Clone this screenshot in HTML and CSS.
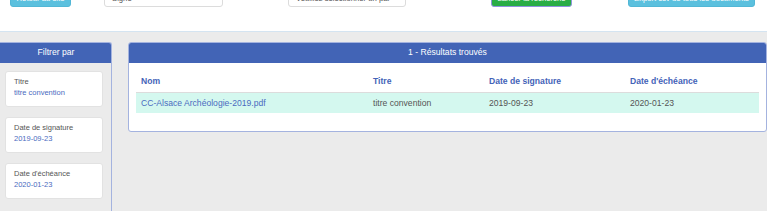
FILE: index.html
```html
<!DOCTYPE html>
<html lang="fr">
<head>
<meta charset="utf-8">
<title>Recherche documents</title>
<link rel="stylesheet" href="styles.css">
</head>
<body>
<header class="topbar">
  <div class="toolbar">
    <a class="btn btn-info btn-back">Retour au site</a>
    <div class="select select-status"><span class="select-text">Signé</span><svg class="caret" width="6" height="4" viewBox="0 0 6 4"><path d="M0.5 0.5 L3 3 L5.5 0.5" fill="none" stroke="#999" stroke-width="1"/></svg></div>
    <div class="select select-party"><span class="select-text">Veuillez sélectionner un parti</span><svg class="caret" width="6" height="4" viewBox="0 0 6 4"><path d="M0.5 0.5 L3 3 L5.5 0.5" fill="none" stroke="#999" stroke-width="1"/></svg></div>
    <a class="btn btn-success btn-search">Lancer la recherche</a>
    <a class="btn btn-info btn-export">Export csv de tous les documents</a>
  </div>
</header>
<main class="main">
  <aside class="sidebar">
    <div class="panel-head">Filtrer par</div>
    <div class="filters">
      <div class="filter-card">
        <div class="filter-label">Titre</div>
        <div class="filter-value">titre convention</div>
      </div>
      <div class="filter-card">
        <div class="filter-label">Date de signature</div>
        <div class="filter-value">2019-09-23</div>
      </div>
      <div class="filter-card">
        <div class="filter-label">Date d'échéance</div>
        <div class="filter-value">2020-01-23</div>
      </div>
    </div>
  </aside>
  <section class="results">
    <div class="panel-head">1 - Résultats trouvés</div>
    <div class="results-body">
      <table class="results-table">
        <thead>
          <tr>
            <th class="col-name">Nom</th>
            <th class="col-title">Titre</th>
            <th class="col-sign">Date de signature</th>
            <th class="col-end">Date d'échéance</th>
          </tr>
        </thead>
        <tbody>
          <tr class="row-hit">
            <td><a class="doc-link">CC-Alsace Archéologie-2019.pdf</a></td>
            <td>titre convention</td>
            <td>2019-09-23</td>
            <td>2020-01-23</td>
          </tr>
        </tbody>
      </table>
    </div>
  </section>
</main>
</body>
</html>
```
FILE: styles.css
```css
* { box-sizing: border-box; }
html, body { margin: 0; padding: 0; }
body {
  background: #ebebeb;
  font-family: "Liberation Sans", Arial, sans-serif;
  color: #555;
  overflow: hidden;
  height: 211px;
}

.topbar {
  height: 32px;
  background: #fff;
  border-bottom: 1px solid #d4e4f1;
  overflow: hidden;
}
.toolbar {
  display: flex;
  align-items: flex-start;
  margin-top: -12px;
  padding-left: 10px;
}
.btn {
  display: block;
  height: 19px;
  line-height: 20px;
  font-size: 7.7px;
  color: #fff;
  text-align: center;
  border-radius: 3px;
  white-space: nowrap;
  overflow: hidden;
}
.btn-info { background: #5bc0de; border: 1px solid #52b7d6; }
.btn-success { background: #29ad45; border: 1px solid #8e94dc; }
.btn-back { width: 61px; }
.select {
  display: flex;
  align-items: center;
  gap: 3px;
  height: 19px;
  padding: 1px 6px 0 7px;
  font-size: 7.7px;
  color: #555;
  background: #fff;
  border: 1px solid #dcdcdc;
  border-radius: 3px;
}
.select-text {
  flex: 1;
  min-width: 0;
  white-space: nowrap;
  overflow: hidden;
}
.caret { flex: none; }
.select-status { width: 119px; margin-left: 33px; }
.select-party { width: 118px; margin-left: 65px; }
.btn-search { width: 81px; margin-left: 85px; }
.btn-export { width: 127px; margin-left: 56px; }

.main {
  display: flex;
  align-items: flex-start;
  gap: 16px;
  padding-top: 10px;
}
.panel-head {
  height: 21px;
  line-height: 21px;
  background: #4264b6;
  color: #fff;
  font-size: 8.6px;
  text-align: center;
}
.sidebar {
  flex: none;
  width: 113px;
  margin-left: -1px;
  min-height: 200px;
  border: 1px solid #a4b3df;
  border-bottom: none;
  border-top-right-radius: 3px;
  overflow: hidden;
}
.sidebar .panel-head { margin: -1px -1px 0 0; }
.filters {
  display: flex;
  flex-direction: column;
  gap: 10px;
  padding: 8px 8px 0 5px;
}
.filter-card {
  background: #fff;
  border: 1px solid #e2e2e2;
  border-radius: 3px;
  padding: 5px 8px 8px;
  font-size: 7.5px;
  line-height: 10.5px;
  height: 36px;
}
.filter-label { color: #555; }
.filter-value { color: #4a6bc0; }

.results {
  flex: 1;
  background: #fff;
  border: 1px solid #a4b3df;
  border-radius: 3px;
  overflow: hidden;
}
.results .panel-head { margin: -1px -1px 0; }
.results-body { padding: 7px 7px 18px; }
.results-table {
  width: 100%;
  border-collapse: collapse;
  font-size: 8.6px;
  table-layout: fixed;
}
.results-table th,
.results-table td {
  text-align: left;
  padding: 0 5px;
  white-space: nowrap;
}
.results-table th {
  height: 22px;
  color: #4463b8;
  font-weight: bold;
  border-bottom: 1px solid #dcdcdc;
}
.results-table td { height: 21px; color: #555; }
.row-hit { background: #d4f8ef; }
.doc-link { color: #4a6bc0; }
.col-name { width: 232px; }
.col-title { width: 116px; }
.col-sign { width: 141px; }
```
